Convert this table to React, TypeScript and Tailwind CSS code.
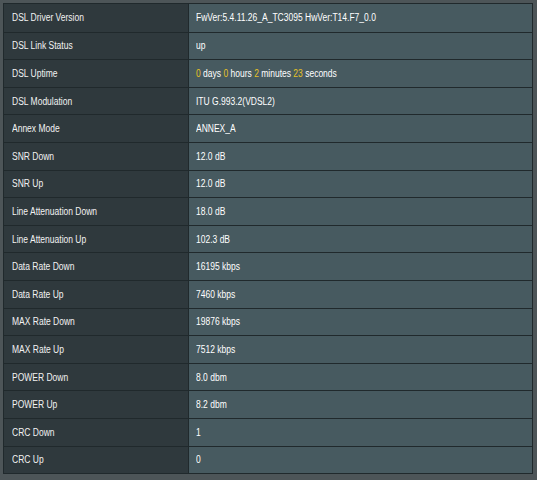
import React from "react";

const Y = ({ children }: { children: React.ReactNode }) => (
  <span className="text-[#e8c224]">{children}</span>
);

const rows: [string, React.ReactNode][] = [
  ["DSL Driver Version", "FwVer:5.4.11.26_A_TC3095 HwVer:T14.F7_0.0"],
  ["DSL Link Status", "up"],
  [
    "DSL Uptime",
    <>
      <Y>0</Y> days <Y>0</Y> hours <Y>2</Y> minutes <Y>23</Y> seconds
    </>,
  ],
  ["DSL Modulation", "ITU G.993.2(VDSL2)"],
  ["Annex Mode", "ANNEX_A"],
  ["SNR Down", "12.0 dB"],
  ["SNR Up", "12.0 dB"],
  ["Line Attenuation Down", "18.0 dB"],
  ["Line Attenuation Up", "102.3 dB"],
  ["Data Rate Down", "16195 kbps"],
  ["Data Rate Up", "7460 kbps"],
  ["MAX Rate Down", "19876 kbps"],
  ["MAX Rate Up", "7512 kbps"],
  ["POWER Down", "8.0 dbm"],
  ["POWER Up", "8.2 dbm"],
  ["CRC Down", "1"],
  ["CRC Up", "0"],
];

export default function App() {
  return (
    <div
      className="w-[537px] h-[480px] bg-[#4d5558] pt-[3px] pl-[3px]"
      style={{ fontFamily: '"Liberation Sans", Arial, sans-serif' }}
    >
      <div className="w-[530px] border border-[#20292c] flex flex-col">
        {rows.map(([k, v], i) => (
          <div
            key={i}
            className={`flex h-[27.6px] ${i > 0 ? "border-t border-[#20292c]" : ""}`}
          >
            <div className="w-[185px] bg-[#2f393d] border-r border-[#20292c] flex items-center pl-[8px] text-[10px] text-[#f2f2f2] whitespace-nowrap">
              <span className="inline-block origin-left scale-x-[0.85]">{k}</span>
            </div>
            <div className="flex-1 bg-[#475a60] flex items-center pl-[7px] text-[10px] text-white whitespace-nowrap">
              <span className="inline-block origin-left scale-x-[0.85]">{v}</span>
            </div>
          </div>
        ))}
      </div>
    </div>
  );
}
